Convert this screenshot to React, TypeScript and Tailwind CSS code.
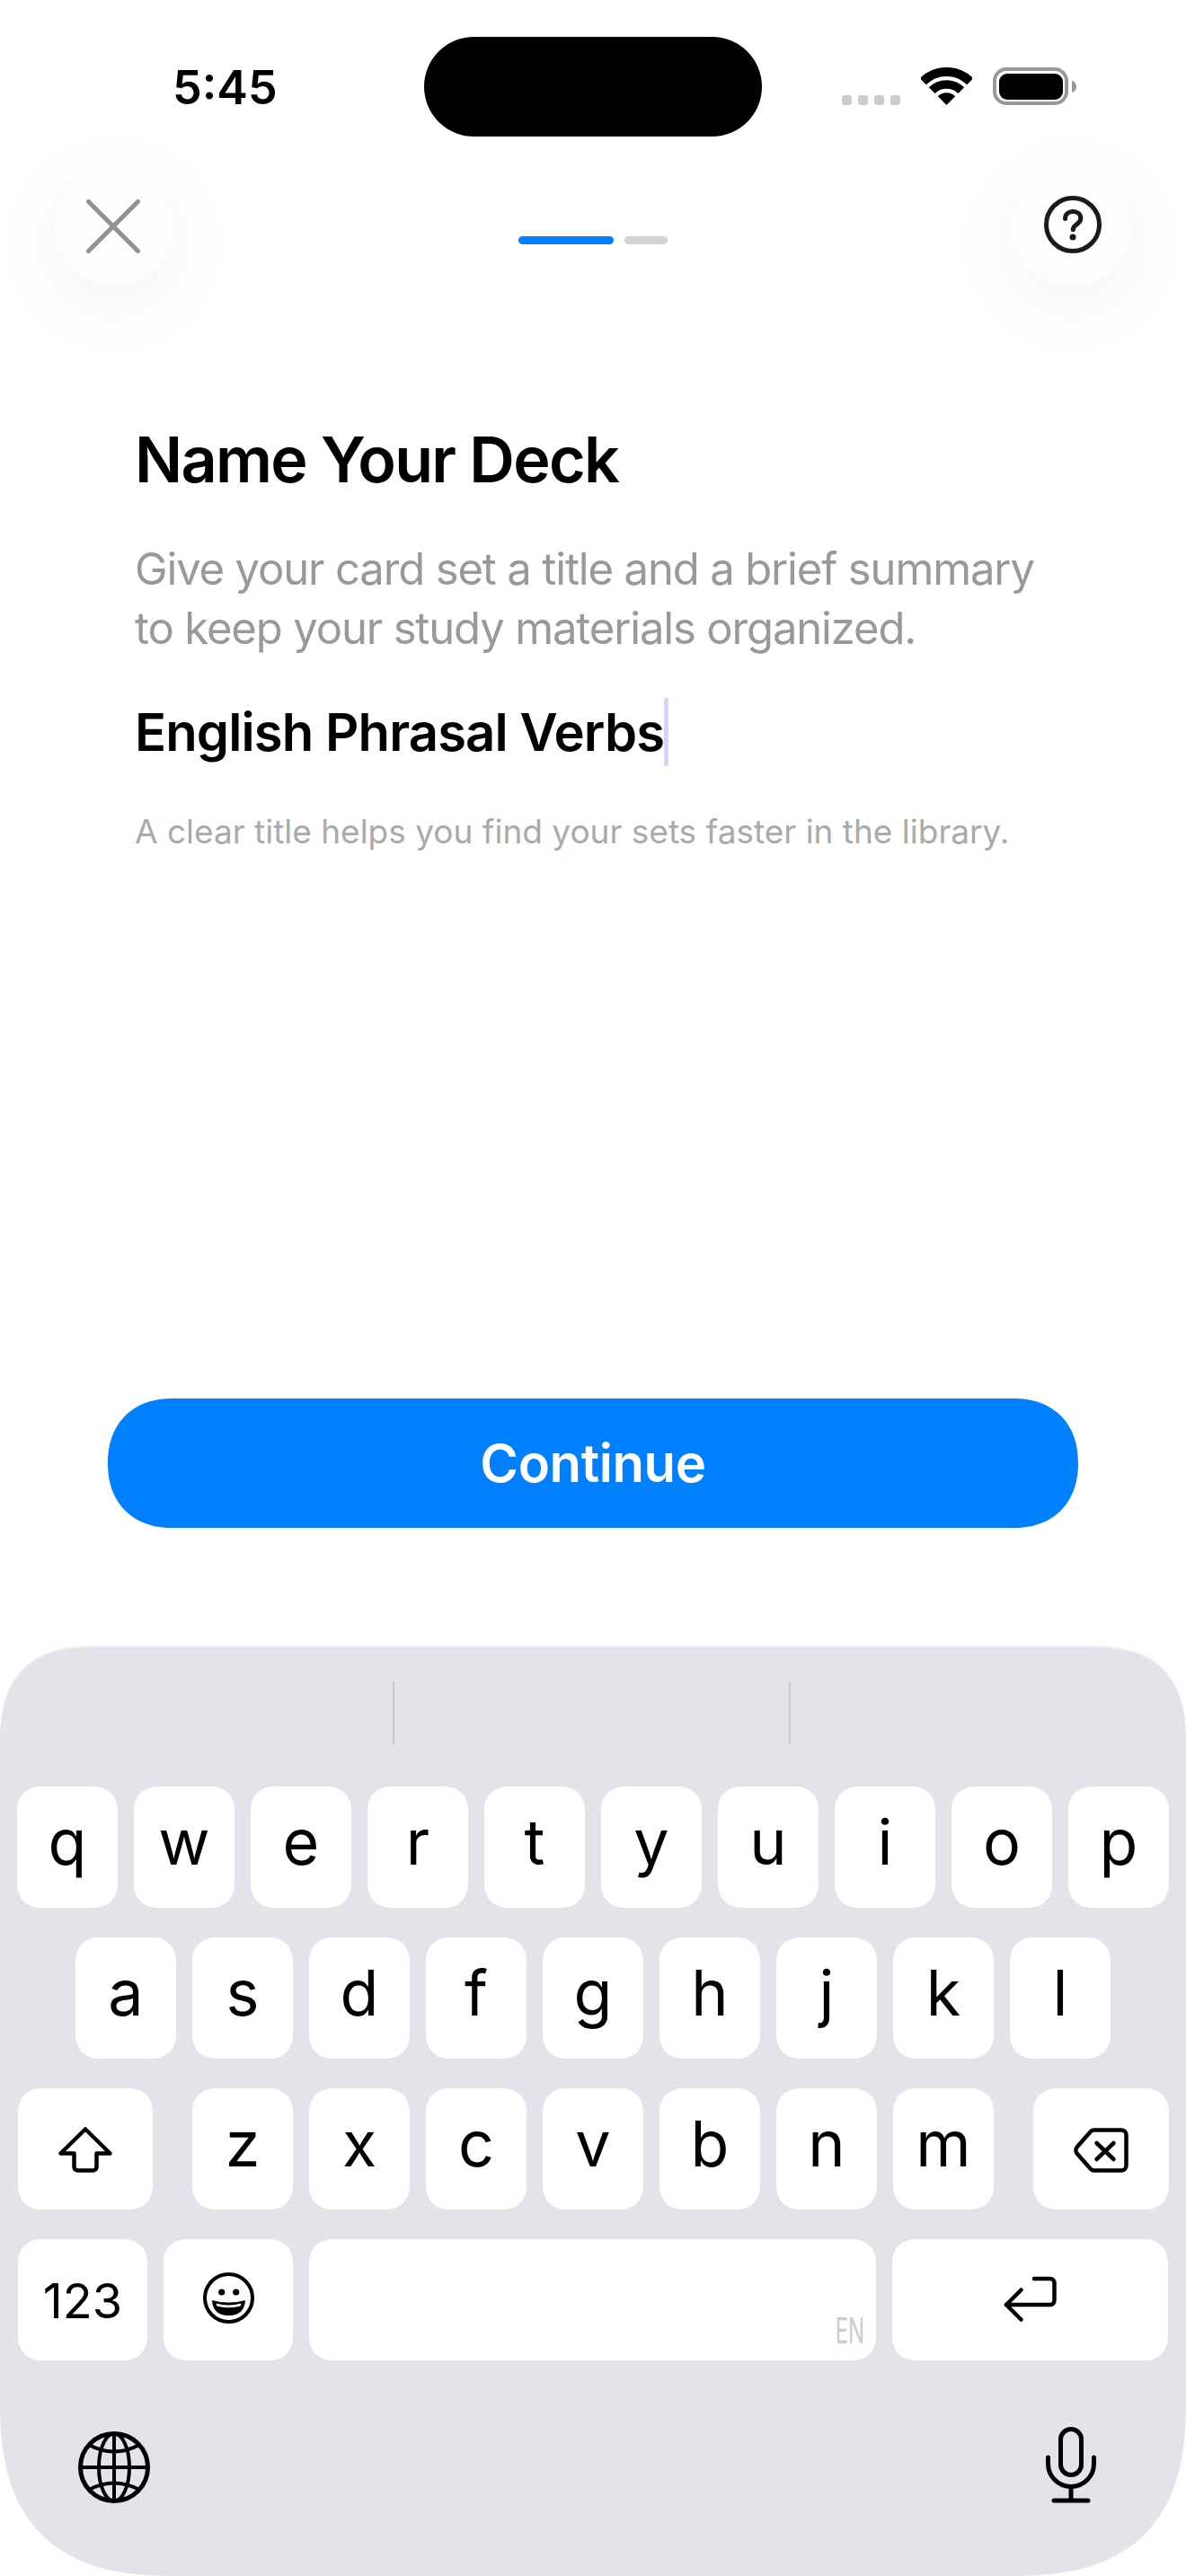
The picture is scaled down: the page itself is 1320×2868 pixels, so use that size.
const FONT = "font-['Inter','Noto_Sans',sans-serif]";

const ROW_1 = ["q", "w", "e", "r", "t", "y", "u", "i", "o", "p"];
const ROW_2 = ["a", "s", "d", "f", "g", "h", "j", "k", "l"];
const ROW_3 = ["z", "x", "c", "v", "b", "n", "m"];

function WifiIcon() {
  return (
    <svg width="57" height="42" viewBox="0 0 57 42" fill="none" stroke="#000">
      <path d="M2.3 15.8A37 37 0 0 1 54.7 15.8" strokeWidth="10" />
      <path d="M12.2 25.7A23 23 0 0 1 44.8 25.7" strokeWidth="9.5" />
      <path d="M28.5 42L18.8 32.3A13.7 13.7 0 0 1 38.2 32.3Z" fill="#000" stroke="none" />
    </svg>
  );
}

function BatteryIcon() {
  return (
    <svg width="93" height="42" viewBox="0 0 93 42">
      <rect x="2" y="2" width="80" height="38" rx="13" fill="none" stroke="#999" strokeWidth="4" />
      <rect x="7" y="7" width="71" height="29" rx="9" fill="#000" />
      <path d="M88 15c3 .6 5 3 5 6.500s-2 5.900-5 6.500z" fill="#999" />
    </svg>
  );
}

function CloseIcon() {
  return (
    <svg width="60" height="60" viewBox="0 0 60 60" fill="none" stroke="#929292" strokeWidth="5" strokeLinecap="round">
      <path d="M2.500 2.500L57.500 57.500M57.500 2.500L2.500 57.500" />
    </svg>
  );
}

function HelpIcon() {
  return (
    <svg width="64" height="64" viewBox="0 0 64 64" fill="none" stroke="#1a1a1a" strokeWidth="5" strokeLinecap="round">
      <circle cx="32" cy="32" r="29.500" />
      <path d="M23.500 25.500c0-5 3.800-8 8.700-8 4.800 0 8.600 2.900 8.600 7.500 0 3.400-2 5.200-4.500 6.800-2.500 1.600-4 3-4 6" strokeWidth="5" />
      <circle cx="32" cy="46" r="3.500" fill="#1a1a1a" stroke="none" />
    </svg>
  );
}

function ShiftIcon() {
  return (
    <svg width="60" height="51" viewBox="0 0 60 51" fill="none" stroke="#000" strokeWidth="4.500" strokeLinejoin="round">
      <path d="M30 2.500L2.500 29.500H17.500V44.500a4 4 0 0 0 4 4H38.500a4 4 0 0 0 4-4V29.500H57.500Z" />
    </svg>
  );
}

function DeleteIcon() {
  return (
    <svg width="61" height="50" viewBox="0 0 61 50" fill="none" stroke="#000" strokeWidth="4.500" strokeLinecap="round" strokeLinejoin="round">
      <path d="M23 2.500H53a5.500 5.500 0 0 1 5.500 5.500V42a5.500 5.500 0 0 1-5.500 5.500H23a6 6 0 0 1-4.200-1.700L4 29a6 6 0 0 1 0-8L18.800 4.200A6 6 0 0 1 23 2.500Z" />
      <path d="M25.500 17L44.500 35M44.500 17L25.500 35" />
    </svg>
  );
}

function ReturnIcon() {
  return (
    <svg width="59" height="51" viewBox="0 0 59 51" fill="none" stroke="#000" strokeWidth="4.500" strokeLinecap="round" strokeLinejoin="round">
      <path d="M34 3H52a4.500 4.500 0 0 1 4.500 4.500V27.500a4.500 4.500 0 0 1-4.500 4.500H3" />
      <path d="M19.500 15.500L3 32L19.500 48.500" />
    </svg>
  );
}

function EmojiIcon() {
  return (
    <svg width="57" height="57" viewBox="0 0 57 57" fill="none">
      <circle cx="28.500" cy="28.500" r="26.500" stroke="#000" strokeWidth="4" />
      <circle cx="20.700" cy="22" r="3.600" fill="#000" />
      <circle cx="36.700" cy="22" r="3.600" fill="#000" />
      <path d="M10 31Q28.500 36 47 31Q46 48 28.500 48Q11 48 10 31Z" fill="#000" />
      <path d="M14.500 34.500Q28.500 38.500 42.500 34.500L41.500 37.500Q28.500 41 15.500 37.500Z" fill="#fff" />
    </svg>
  );
}

function GlobeIcon() {
  return (
    <svg width="80" height="80" viewBox="0 0 80 80" fill="none" stroke="#000" strokeWidth="4">
      <circle cx="40" cy="40" r="37.500" strokeWidth="5" />
      <ellipse cx="40" cy="40" rx="17" ry="37.500" />
      <path d="M40 2.500V77.500M2.500 40H77.500" />
      <path d="M12 15Q40 30 68 15M12 65Q40 50 68 65" />
    </svg>
  );
}

function MicIcon() {
  return (
    <svg width="56" height="85" viewBox="0 0 56 85" fill="none" stroke="#000" strokeWidth="5" strokeLinecap="round">
      <rect x="16.500" y="2.500" width="23" height="51" rx="11.500" />
      <path d="M2.500 34V41a25.500 25.500 0 0 0 51 0V34" />
      <path d="M28 67V82M9 82H47" />
    </svg>
  );
}

function Key({ label }: { label: string }) {
  return (
    <div className="flex h-[135px] w-[112px] shrink-0 justify-center rounded-[28px] bg-white pt-[27px] text-[70px] leading-[70px] text-black [corner-shape:superellipse(1.2)]">
      {label}
    </div>
  );
}

function IconKey({ className, children }: { className: string; children: React.ReactNode }) {
  return (
    <div className={`flex h-[135px] shrink-0 justify-center rounded-[28px] bg-white [corner-shape:superellipse(1.2)] ${className}`}>
      {children}
    </div>
  );
}

export default function App() {
  return (
    <div className={`flex h-[2868px] w-[1320px] flex-col overflow-hidden bg-white ${FONT}`}>
      {/* Status bar */}
      <div className="mt-[41px] flex h-[111px] shrink-0">
        <div className="ml-[192px] w-[280px] pt-[25px] text-[52px] leading-[64px] font-semibold text-black">5:45</div>
        <div className="h-[111px] w-[376px] rounded-full bg-black" />
        <div className="mt-[34px] ml-[89px] flex h-[42px] items-end">
          <div className="flex gap-[7px]">
            <div className="h-[11px] w-[11px] rounded-[3px] bg-[#cccccc]" />
            <div className="h-[11px] w-[11px] rounded-[3px] bg-[#cccccc]" />
            <div className="h-[11px] w-[11px] rounded-[3px] bg-[#cccccc]" />
            <div className="h-[11px] w-[11px] rounded-[3px] bg-[#cccccc]" />
          </div>
          <div className="ml-[23px]"><WifiIcon /></div>
          <div className="ml-[23px]"><BatteryIcon /></div>
        </div>
      </div>

      {/* Header */}
      <div className="mt-[34px] flex shrink-0 items-start justify-between px-[60px]">
        <div className="flex h-[132px] w-[132px] items-center justify-center rounded-full bg-[#fdfdfd] shadow-[0_20px_90px_rgba(0,0,0,0.05)]">
          <CloseIcon />
        </div>
        <div className="mt-[77px] flex gap-[12px]">
          <div className="h-[9px] w-[106px] rounded-full bg-[#007fff]" />
          <div className="h-[9px] w-[48px] rounded-full bg-[#d3d3d3]" />
        </div>
        <div className="flex h-[132px] w-[132px] items-center justify-center rounded-full bg-[#fdfdfd] pb-[4px] shadow-[0_20px_90px_rgba(0,0,0,0.05)]">
          <HelpIcon />
        </div>
      </div>

      {/* Form */}
      <div className="flex flex-1 flex-col px-[150px] pt-[154px]">
        <h1 className="text-[70px] leading-[80px] font-semibold tracking-[-1.7px] text-black">Name Your Deck</h1>
        <p className="mt-[49px] text-[49px] leading-[66px] tracking-[-1.15px] whitespace-nowrap text-[#999999]">
          Give your card set a title and a brief summary
          <br />
          to keep your study materials organized.
        </p>
        <div className="mt-[44px] flex h-[76px] items-center text-[58px] font-semibold tracking-[-0.9px] text-black">
          <span>English Phrasal Verbs</span>
          <span className="h-[76px] w-[5px] rounded-full bg-[#cdd8fb]" />
        </div>
        <p className="mt-[50px] text-[37px] leading-[46px] text-[#aaaaaa]">
          A clear title helps you find your sets faster in the library.
        </p>
      </div>

      {/* Continue */}
      <div className="mx-[120px] mb-[133px] flex h-[144px] shrink-0 items-center justify-center rounded-[72px] bg-[#007fff] text-[58px] font-semibold tracking-[-0.4px] text-white [corner-shape:superellipse(1.15)]">
        Continue
      </div>

      {/* Keyboard */}
      <div className="flex h-[1034px] shrink-0 flex-col rounded-t-[110px] rounded-b-[200px] bg-[#e2e4e9] pt-[38px] shadow-[0_-2px_0_#f0f1f4] [corner-shape:superellipse(1.4)]">
        <div className="flex h-[71px]">
          <div className="w-[439px] border-r-2 border-[#c9cacd]" />
          <div className="w-[441px] border-r-2 border-[#c9cacd]" />
        </div>

        <div className="mt-[46px] flex flex-col gap-[33px]">
          <div className="flex justify-center gap-[18px]">
            {ROW_1.map((k) => (
              <Key key={k} label={k} />
            ))}
          </div>
          <div className="flex justify-center gap-[18px]">
            {ROW_2.map((k) => (
              <Key key={k} label={k} />
            ))}
          </div>
          <div className="flex px-[20px]">
            <IconKey className="w-[150px] pt-[43px]">
              <ShiftIcon />
            </IconKey>
            <div className="ml-[44px] flex gap-[18px]">
              {ROW_3.map((k) => (
                <Key key={k} label={k} />
              ))}
            </div>
            <IconKey className="ml-[44px] w-[151px] pt-[44px]">
              <DeleteIcon />
            </IconKey>
          </div>
          <div className="flex gap-[18px] px-[20px]">
            <IconKey className="w-[144px] pt-[42px] text-[54px] leading-[54px] text-black">123</IconKey>
            <IconKey className="w-[144px] pt-[37px]">
              <EmojiIcon />
            </IconKey>
            <div className="relative h-[135px] flex-1 rounded-[28px] bg-white [corner-shape:superellipse(1.2)]">
              <span className="absolute right-[13px] bottom-[13px] origin-right scale-x-[0.6] text-[40px] leading-[40px] text-[#cccccc]">EN</span>
            </div>
            <IconKey className="w-[307px] pt-[41px]">
              <ReturnIcon />
            </IconKey>
          </div>
        </div>

        <div className="mt-[74px] flex items-end justify-between pr-[100px] pl-[87px]">
          <GlobeIcon />
          <MicIcon />
        </div>
      </div>
    </div>
  );
}
